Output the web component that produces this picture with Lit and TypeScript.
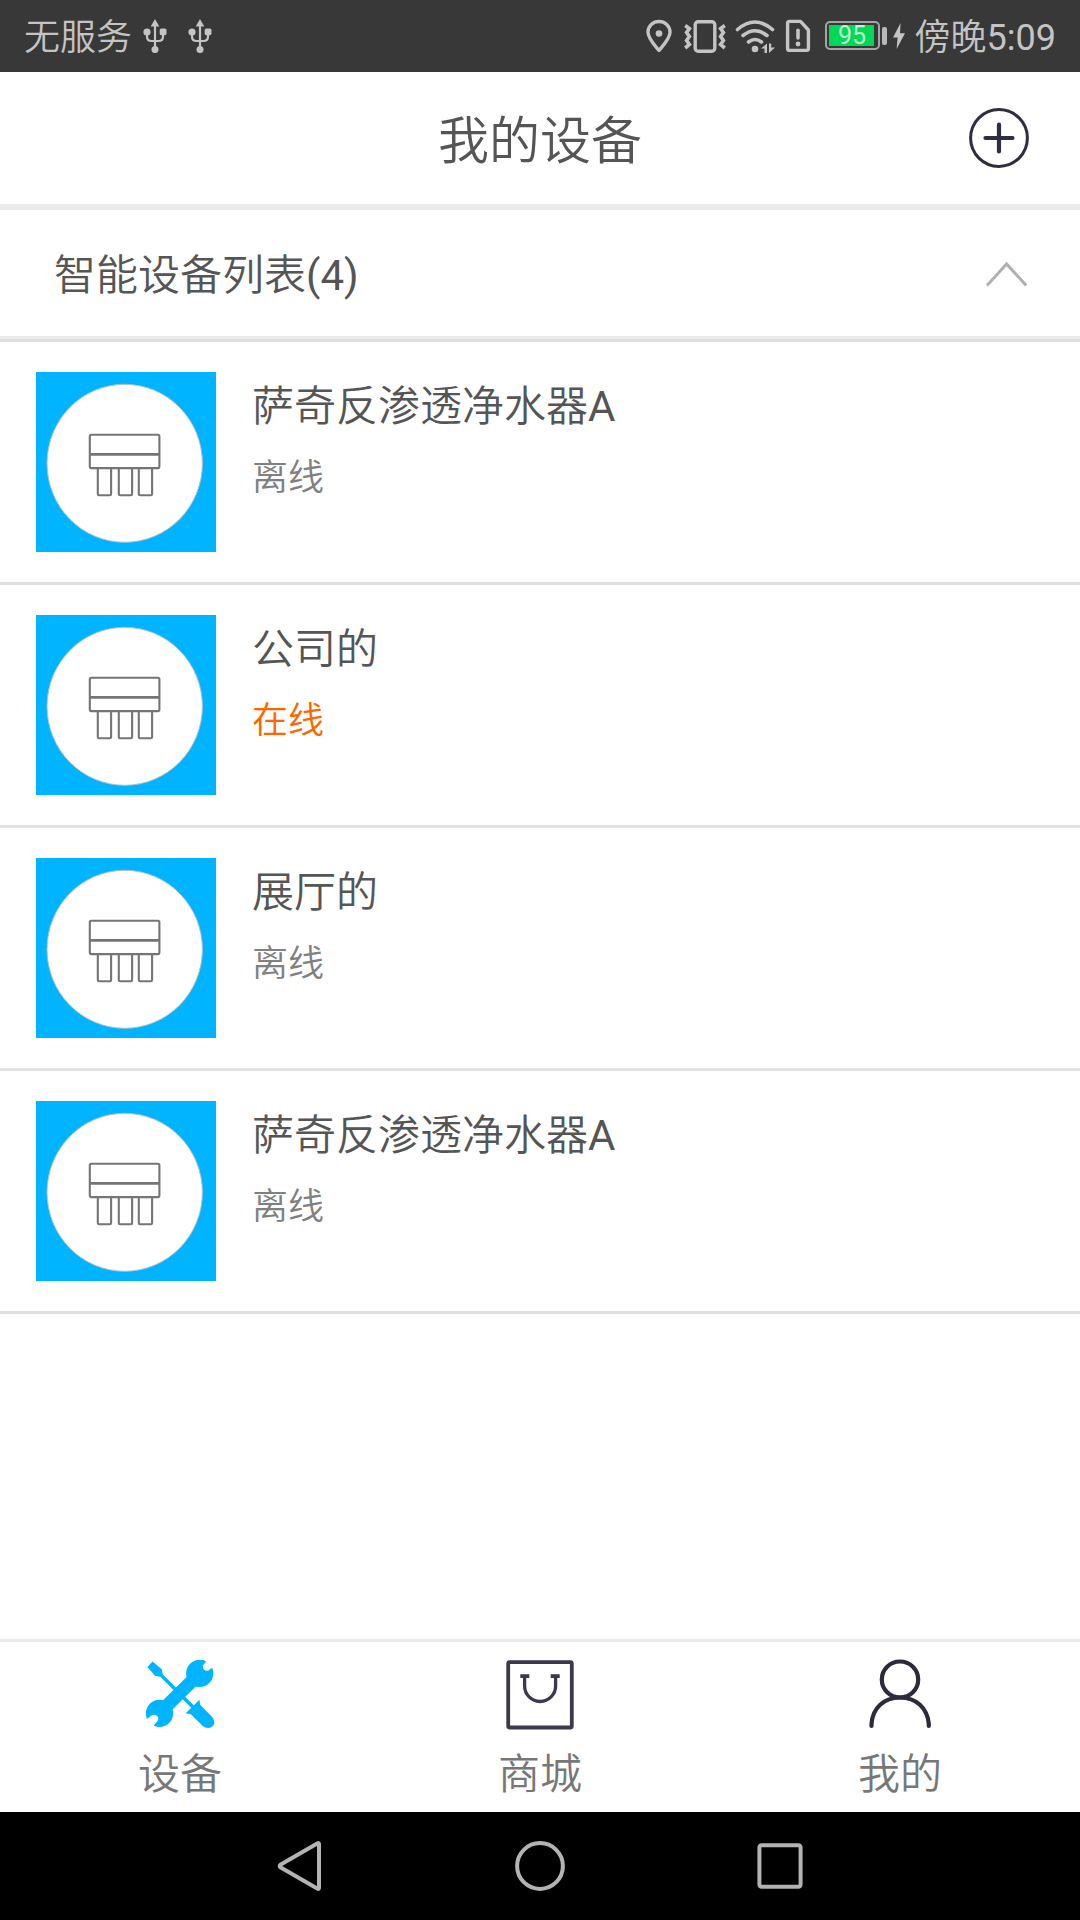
import { LitElement, html, css, svg } from "lit";
import { customElement, property } from "lit/decorators.js";
import { classMap } from "lit/directives/class-map.js";

interface Device {
  name: string;
  suffix?: string;
  online: boolean;
}

const devices: Device[] = [
  { name: "萨奇反渗透净水器", suffix: "A", online: false },
  { name: "公司的", online: true },
  { name: "展厅的", online: false },
  { name: "萨奇反渗透净水器", suffix: "A", online: false },
];

const usb = html`<svg class="usb" width="24" height="36" viewBox="0 0 24 36" fill="#c4c4c4">
  <path d="M12 1 L16.3 8.5 H7.7 Z" />
  <circle cx="4" cy="14" r="3.6" />
  <rect x="16.7" y="10.4" width="6.8" height="6.8" rx="1.6" />
  <circle cx="12" cy="31.4" r="3.5" />
  <path d="M12 6 V30 M4 15 V18.5 Q4 23 8.5 23 H15.5 Q20 23 20 18.5 V15" fill="none" stroke="#c4c4c4" stroke-width="2.2" />
</svg>`;

@customElement("status-bar")
class StatusBar extends LitElement {
  static styles = css`
    :host {
      display: flex;
      align-items: center;
      justify-content: space-between;
      box-sizing: border-box;
      height: 72px;
      padding: 0 24px;
      background: #383838;
      color: #c4c4c4;
      font: 350 36px/72px Roboto, "Noto Sans CJK SC", sans-serif;
    }
    .group {
      display: flex;
      align-items: center;
      height: 72px;
      white-space: nowrap;
    }
    .carrier {
      width: 108px;
      margin-right: 11px;
      padding-top: 4px;
    }
    .usb {
      margin-right: 21px;
    }
    .pin {
      margin-right: 10px;
    }
    .vibrate {
      margin-right: 8px;
    }
    .wifi {
      margin-right: 9px;
    }
    .sim {
      margin-right: 14px;
    }
    .battery {
      display: flex;
      align-items: center;
      box-sizing: border-box;
      width: 55px;
      height: 29px;
      padding: 2px;
      margin-bottom: 1px;
      border: 2px solid #a5a5a5;
      border-radius: 5px;
    }
    .charge {
      width: 45px;
      height: 21px;
      color: #bdf5cf;
      background: #00d957;
      text-align: center;
      font: 400 25px/22px Roboto, sans-serif;
      text-indent: 2px;
    }
    .nub {
      width: 5px;
      height: 18px;
      margin: 0 5px 0 2px;
      border-radius: 2px;
      background: #b8b8b8;
    }
    .bolt {
      margin-right: 9px;
    }
    .time {
      padding-top: 4px;
    }
    .clock {
      font-weight: 400;
    }
  `;

  render() {
    return html`
      <div class="group">
        <span class="carrier">无服务</span>${usb}${usb}
      </div>
      <div class="group">
        <svg class="pin" width="28" height="36" viewBox="0 0 28 36" fill="none" stroke="#c4c4c4">
          <path d="M14 32.5 C10 27.5 3 20.5 3 14.2 C3 7.8 8 3.5 14 3.5 S25 7.8 25 14.2 C25 20.5 18 27.5 14 32.5 Z" stroke-width="3.4" stroke-linejoin="round" />
          <circle cx="14" cy="15.5" r="3.3" fill="#c4c4c4" stroke="none" />
        </svg>
        <svg class="vibrate" width="44" height="36" viewBox="0 0 44 36" fill="none" stroke="#c4c4c4" stroke-width="3.4">
          <rect x="12.2" y="3.7" width="19.6" height="29.6" rx="3" />
          <path d="M2.2 7.5 L6.4 10.6 L3.6 14.5 L6.4 18.5 L3.6 22.5 L6.4 26.5 L2.2 30 M41.8 7.5 L37.6 10.6 L40.4 14.5 L37.6 18.5 L40.4 22.5 L37.6 26.5 L41.8 30" stroke-width="3.6" />
        </svg>
        <svg class="wifi" width="41" height="36" viewBox="0 0 41 36" fill="none" stroke="#c4c4c4" stroke-width="3.6" stroke-linecap="round">
          <path d="M2.5 11.5 Q20 -3.5 37.5 11.5 M8 17.5 Q20 8 32 17.5 M13.5 24 Q20 19 26.5 24" />
          <circle cx="20" cy="31" r="3.3" fill="#c4c4c4" stroke="none" />
          <path d="M26 30.5 L32 25.5 V35 H29.5 V30.5 Z M34 25.5 H36.2 V29.5 H40 L34 35 Z" fill="#c4c4c4" stroke="none" />
        </svg>
        <svg class="sim" width="26" height="36" viewBox="0 0 26 36" fill="none" stroke="#c4c4c4" stroke-width="3.4" stroke-linejoin="round">
          <path d="M4.5 3.4 H15.5 L23.4 12 V30.6 Q23.4 32.4 21.6 32.4 H4.4 Q2.6 32.4 2.6 30.6 V5.2 Q2.6 3.4 4.5 3.4 Z" />
          <path d="M13 12.3 V20" stroke-linecap="round" stroke-width="3.6" />
          <circle cx="13" cy="26" r="2.4" fill="#c4c4c4" stroke="none" />
        </svg>
        <div class="battery"><div class="charge">95</div></div>
        <div class="nub"></div>
        <svg class="bolt" width="14" height="28" viewBox="0 0 14 28" fill="#c4c4c4">
          <path d="M8.6 1 L1 15.6 H5.6 L4.6 27 L13 11.2 H8 Z" />
        </svg>
        <span class="time">傍晚<span class="clock">5:09</span></span>
      </div>
    `;
  }
}

@customElement("device-row")
class DeviceRow extends LitElement {
  @property() name = "";
  @property() suffix = "";
  @property({ type: Boolean }) online = false;

  static styles = css`
    :host {
      display: flex;
      gap: 36px;
      box-sizing: border-box;
      height: 243px;
      padding: 30px 36px;
      border-bottom: 3px solid #e0e0e0;
    }
    .thumb {
      flex: none;
      display: block;
    }
    .info {
      display: flex;
      flex-direction: column;
      padding-top: 5px;
    }
    .name {
      font-size: 42px;
      line-height: 60px;
      color: #555;
    }
    .latin {
      font-weight: 400;
    }
    .state {
      margin-top: 15px;
      font-size: 36px;
      line-height: 52px;
      color: #808080;
    }
    .online {
      color: #ff6600;
    }
  `;

  render() {
    return html`
      <svg class="thumb" width="180" height="180" viewBox="0 0 180 180">
        <rect width="180" height="180" fill="#00b4ff" />
        <ellipse cx="88.7" cy="91.3" rx="77.7" ry="79" fill="#fff" stroke="#aebfc8" stroke-width="1" />
        <g fill="none" stroke="#757575" stroke-width="2.1">
          <rect x="53.8" y="62.8" width="69.6" height="33.3" rx="1.5" />
          <path d="M54 82.4 H123" stroke-width="2.6" />
          ${[61.8, 82.8, 102.8].map(
            (x) => svg`<path d="M${x} 97 V122 Q${x} 123.3 ${x + 1.3} 123.3 H${x + 12} Q${x + 13.3} 123.3 ${x + 13.3} 122 V97" />`
          )}
        </g>
      </svg>
      <div class="info">
        <div class="name">${this.name}<span class="latin">${this.suffix}</span></div>
        <div class=${classMap({ state: true, online: this.online })}>${this.online ? "在线" : "离线"}</div>
      </div>
    `;
  }
}

@customElement("app-root")
class AppRoot extends LitElement {
  static styles = css`
    :host {
      display: flex;
      flex-direction: column;
      width: 1080px;
      height: 1920px;
      background: #fff;
      font-family: Roboto, "Noto Sans CJK SC", sans-serif;
      font-weight: 350;
      color: #555;
    }
    .header {
      display: grid;
      grid-template-columns: 1fr auto 1fr;
      align-items: center;
      box-sizing: border-box;
      height: 138px;
      padding: 0 51px;
      border-bottom: 6px solid #ebebeb;
    }
    .title {
      grid-column: 2;
      font-size: 51px;
      line-height: 72px;
      padding-top: 8px;
    }
    .add {
      justify-self: end;
    }
    .section {
      display: flex;
      align-items: center;
      justify-content: space-between;
      box-sizing: border-box;
      height: 129px;
      padding: 0 51px 0 54px;
      border-bottom: 3px solid #ebebeb;
      font-size: 42px;
    }
    .heading {
      padding-bottom: 3px;
    }
    .count {
      font-weight: 400;
    }
    .chevron {
      margin-top: 2px;
    }
    .list {
      flex: 1;
      border-top: 3px solid #e0e0e0;
    }
    .tabs {
      display: grid;
      grid-template-columns: repeat(3, 1fr);
      box-sizing: border-box;
      height: 173px;
      border-top: 3px solid #ebebeb;
    }
    .tab {
      display: flex;
      flex-direction: column;
      align-items: center;
      padding-top: 16px;
      color: #777;
      font-size: 42px;
      line-height: 60px;
    }
    .label {
      margin-top: 15px;
    }
    .nav {
      display: grid;
      grid-template-columns: repeat(3, 240px);
      place-content: center;
      place-items: center;
      height: 108px;
      background: #000;
    }
  `;

  render() {
    return html`
      <status-bar></status-bar>
      <div class="header">
        <div class="title">我的设备</div>
        <svg class="add" width="60" height="60" viewBox="0 0 60 60" fill="none" stroke="#2f2d40" stroke-linecap="round">
          <circle cx="30" cy="30" r="28.4" stroke-width="3" />
          <path d="M30 16.5 V43.5 M16.5 30 H43.5" stroke-width="4.2" />
        </svg>
      </div>
      <div class="section">
        <span class="heading">智能设备列表<span class="count">(4)</span></span>
        <svg class="chevron" width="44" height="28" viewBox="0 0 44 28" fill="none" stroke="#b0b0b0" stroke-width="3">
          <path d="M2 25.5 L21.6 4 L41.2 25.5" />
        </svg>
      </div>
      <div class="list">
        ${devices.map((d) => html`<device-row .name=${d.name} .suffix=${d.suffix ?? ""} .online=${d.online}></device-row>`)}
      </div>
      <div class="tabs">
        <div class="tab">
          <svg width="72" height="72" viewBox="0 0 72 72" fill="#00b4ff">
            <path d="M19 51.5 L52 19" stroke="#00b4ff" stroke-width="13" />
            <circle cx="55.7" cy="15.4" r="13.6" />
            <circle cx="15.5" cy="55.4" r="13.6" />
            <path d="M65 0 L58.8 7.6 Q58.6 13 64 12.8 L72 7 V0 Z" fill="#fff" />
            <path d="M0 63.6 L7 57.8 Q10.5 55.6 13.2 58 Q15.2 60.6 13.6 62.8 L8 70 H0 Z" fill="#fff" />
            <path d="M15 15 L50 50" stroke="#00b4ff" stroke-width="3.4" />
            <path d="M8.6 3.6 L17.7 11.3 L18.7 16 L16 18.7 L11 17.7 L3.4 8.9 Z" />
            <path d="M55.4 41.8 L56.2 47 L68.2 59 Q72 64 69 68 Q64.3 72 58.7 68 L46.9 56.2 L41.7 55.3 Z" />
          </svg>
          <div class="label">设备</div>
        </div>
        <div class="tab">
          <svg width="72" height="72" viewBox="0 0 72 72" fill="none" stroke="#3b394b">
            <rect x="4.2" y="4.2" width="63.6" height="65.3" rx="1.5" stroke-width="3.8" />
            <path d="M16.3 18.2 H25.3 M46.7 18.2 H55.7" stroke-width="3.8" />
            <path d="M20.6 18 V28 A15.5 15.5 0 0 0 51.6 28 V18" stroke-width="3.3" />
          </svg>
          <div class="label">商城</div>
        </div>
        <div class="tab">
          <svg width="72" height="72" viewBox="0 0 72 72" fill="none" stroke="#2c2a3d" stroke-width="4.2">
            <ellipse cx="36" cy="21.5" rx="18.2" ry="18" />
            <path d="M7.5 68 V66 C8.5 50 20 39.5 36 39.5 S63.5 50 64.8 66 V68" stroke-linecap="round" />
          </svg>
          <div class="label">我的</div>
        </div>
      </div>
      <div class="nav">
        <svg width="52" height="52" viewBox="0 0 52 52" fill="none" stroke="#b3b3b3" stroke-width="4" stroke-linejoin="round">
          <path d="M45 4 V48 Q45 49.6 43.2 48.6 L6.8 27.6 Q4.5 26 6.8 24.4 L43.2 3.4 Q45 2.4 45 4 Z" />
        </svg>
        <svg width="52" height="52" viewBox="0 0 52 52" fill="none" stroke="#b3b3b3" stroke-width="4">
          <circle cx="26" cy="26" r="22.9" />
        </svg>
        <svg width="52" height="52" viewBox="0 0 52 52" fill="none" stroke="#b3b3b3" stroke-width="4">
          <rect x="5.4" y="5.2" width="41.2" height="41.6" rx="2.2" />
        </svg>
      </div>
    `;
  }
}
